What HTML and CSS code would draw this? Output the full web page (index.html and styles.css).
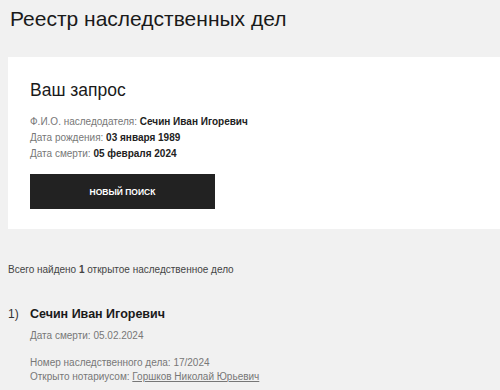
FILE: index.html
```html
<!DOCTYPE html>
<html lang="ru">
<head>
<meta charset="utf-8">
<link rel="stylesheet" href="styles.css">
</head>
<body>
<h1 class="title">Реестр наследственных дел</h1>
<section class="card">
  <h2 class="card-title">Ваш запрос</h2>
  <div class="info">
    <div><span class="label">Ф.И.О. наследодателя:</span> <b>Сечин Иван Игоревич</b></div>
    <div><span class="label">Дата рождения:</span> <b>03 января 1989</b></div>
    <div><span class="label">Дата смерти:</span> <b>05 февраля 2024</b></div>
  </div>
  <button class="btn">НОВЫЙ ПОИСК</button>
</section>
<p class="total">Всего найдено <b>1</b> открытое наследственное дело</p>
<ol class="results">
  <li class="result">
    <span class="num">1)</span>
    <div class="result-body">
      <div class="name">Сечин Иван Игоревич</div>
      <div class="meta date">Дата смерти: 05.02.2024</div>
      <div class="meta gap">Номер наследственного дела: 17/2024</div>
      <div class="meta">Открыто нотариусом: <a href="#" class="link">Горшков Николай Юрьевич</a></div>
    </div>
  </li>
</ol>
</body>
</html>
```
FILE: styles.css
```css
html, body {
  margin: 0;
  padding: 0;
  background: #f1f1f1;
  font-family: "Liberation Sans", Arial, sans-serif;
  color: #222;
}
body {
  padding: 0 0 0 8px;
}
.title {
  margin: 0;
  padding: 6px 0 0 2px;
  font-size: 21px;
  font-weight: normal;
  line-height: 26px;
  color: #1a1a1a;
}
.card {
  margin-top: 25px;
  background: #fff;
  padding: 22px 22px 20px 22px;
  height: 130px;
}
.card-title {
  margin: 0;
  font-size: 17.5px;
  font-weight: normal;
  line-height: 22px;
  color: #1a1a1a;
}
.info {
  margin-top: 13px;
  font-size: 10px;
  line-height: 16px;
}
.label {
  color: #777;
}
.info b {
  color: #222;
}
.btn {
  margin-top: 12px;
  width: 185px;
  height: 35px;
  border: 0;
  background: #222;
  color: #fff;
  font-family: "Liberation Sans", Arial, sans-serif;
  font-size: 8.5px;
  font-weight: bold;
  cursor: pointer;
}
.total {
  margin: 33px 0 0 0;
  font-size: 10px;
  line-height: 16px;
  color: #444;
}
.results {
  list-style: none;
  margin: 26px 0 0 0;
  padding: 0;
}
.result {
  display: flex;
}
.num {
  width: 22px;
  font-size: 12px;
  line-height: 20px;
  color: #333;
}
.name {
  font-size: 12.5px;
  font-weight: bold;
  line-height: 20px;
  color: #1a1a1a;
}
.meta {
  font-size: 10px;
  line-height: 14px;
  color: #777;
}
.meta.date {
  margin-top: 5px;
}
.meta.gap {
  margin-top: 13px;
}
.link {
  color: #777;
  text-decoration: underline;
}
```
